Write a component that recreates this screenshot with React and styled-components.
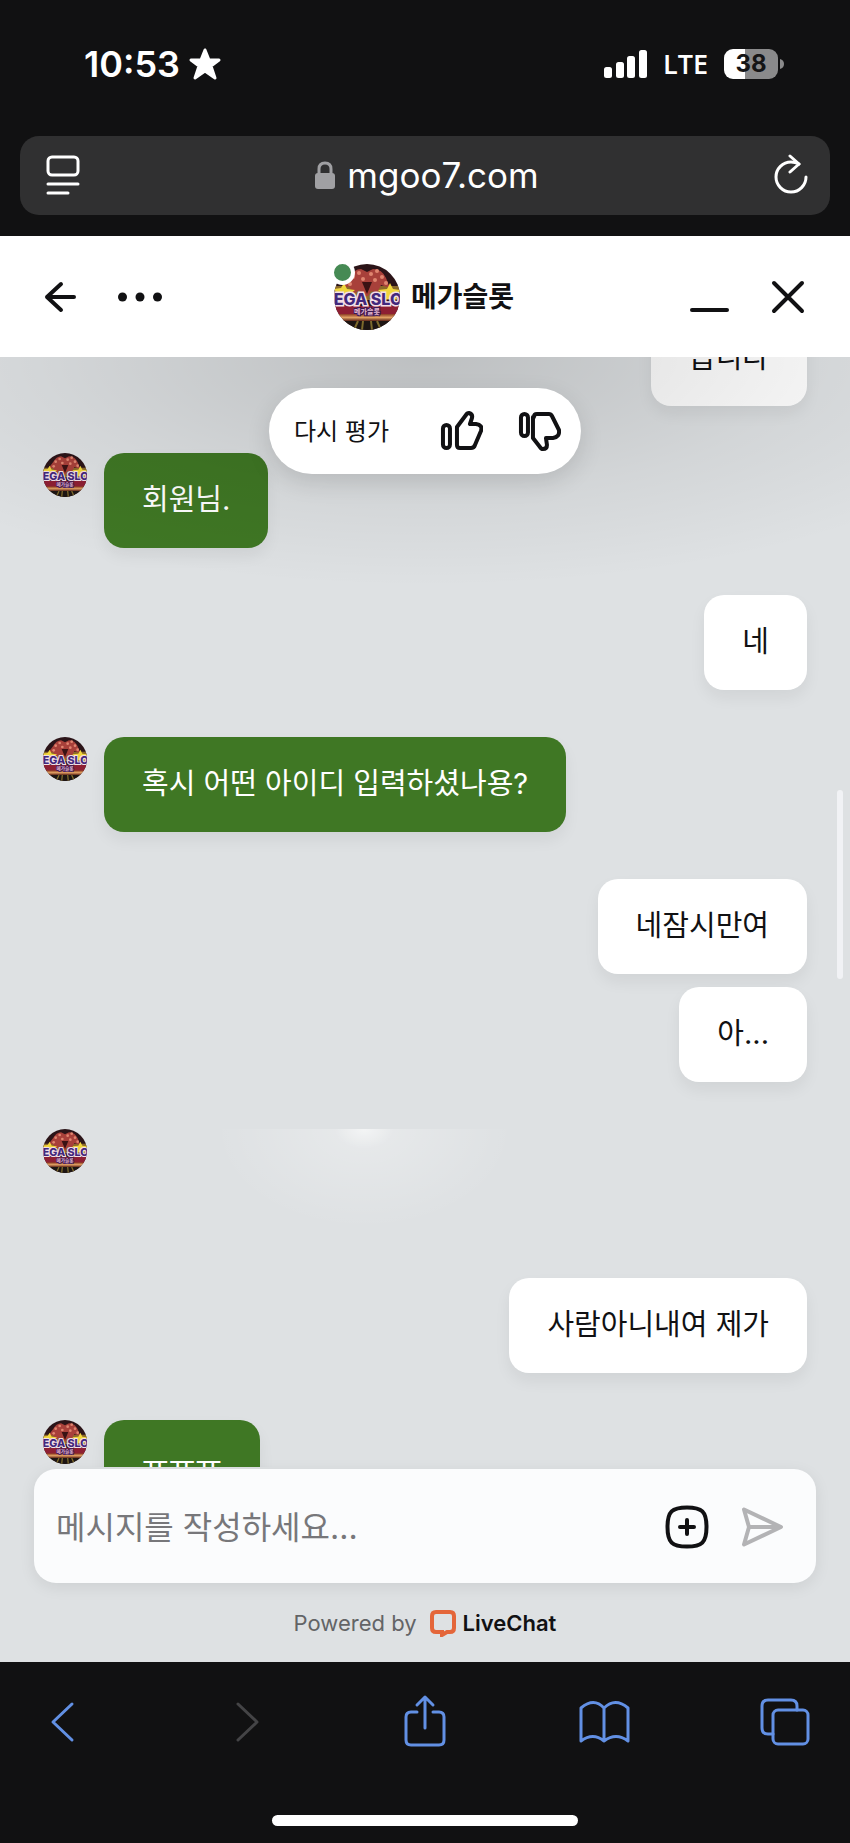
import React, { useId, useLayoutEffect, useRef, useState } from 'react'
import styled, { createGlobalStyle } from 'styled-components'

const GlobalStyle = createGlobalStyle`
   * {
      box-sizing: border-box;
   }
   body {
      margin: 0;
      background: #111112;
      font-family: Inter, 'Noto Sans CJK KR', sans-serif;
   }
   button {
      font: inherit;
      color: inherit;
      background: none;
      border: none;
      padding: 0;
      cursor: pointer;
   }
   svg {
      display: block;
      flex: none;
   }
`

const MESSAGES = [
   { id: 1, text: '습니다', own: true },
   { id: 2, text: '회원님.' },
   { id: 3, text: '네', own: true },
   { id: 4, text: '혹시 어떤 아이디 입력하셨나용?' },
   { id: 5, text: '네잠시만여', own: true },
   { id: 6, text: '아...', own: true, grouped: true },
   { id: 7, loading: true },
   { id: 8, text: '사람아니내여 제가', own: true },
   { id: 9, text: 'ㅠㅠㅠ' },
]

const AgentAvatar = ({ size }) => {
   const id = useId()
   return (
      <svg width={size} height={size} viewBox="0 0 66 66" role="img" aria-label="메가슬롯">
         <defs>
            <clipPath id={`${id}clip`}>
               <circle cx="33" cy="33" r="33" />
            </clipPath>
            <linearGradient id={`${id}gold`} x1="0" y1="0" x2="0" y2="1">
               <stop offset="0" stopColor="#8a3a22" />
               <stop offset="0.5" stopColor="#e0a063" />
               <stop offset="1" stopColor="#5e2417" />
            </linearGradient>
         </defs>
         <g clipPath={`url(#${id}clip)`}>
            <rect width="66" height="66" fill="#2b1418" />
            <path d="M0 22h66v14H0z" fill="#8c6a2a" />
            <path d="M15 14q5-9 12-9l6 3 6-3q9 0 13 9l4 10-9-3-4 8-6-2-3 5h-6l-2-6-7 4-4-8-10 5z" fill="#a8403a" />
            <g fill="#e08570">
               <circle cx="19" cy="13" r="2" />
               <circle cx="25" cy="9" r="2" />
               <circle cx="29" cy="15" r="2" />
               <circle cx="37" cy="10" r="2" />
               <circle cx="43" cy="7" r="2" />
               <circle cx="48" cy="13" r="2" />
               <circle cx="41" cy="16" r="2" />
               <circle cx="34" cy="20" r="2" />
               <circle cx="52" cy="19" r="2" />
               <circle cx="16" cy="20" r="2" />
            </g>
            <path d="M28 18l5 12 5-12z" fill="#3a1214" />
            <path d="M10 19l3 6 8 1-6 5 1 4H2l2-6-5-4 8-1zM56 19l3 6 8 1-6 5 2 4H46l3-5-5-4 9-1z" fill="#f0d63c" />
            <rect y="42" width="66" height="9" fill="#8e1f33" />
            <rect y="50" width="66" height="7" fill={`url(#${id}gold)`} />
            <rect y="57" width="66" height="9" fill="#1d1513" />
            <path d="M20 66l4-9M28 66l1-9M38 66l-1-9M47 66l-4-9" stroke="#7d6a2c" strokeWidth="2" />
            <text
               x="34" y="41" textAnchor="middle" fontFamily="Inter, sans-serif" fontSize="16" fontWeight="800"
               fill="#43287c" stroke="#f3dfe6" strokeWidth="3" paintOrder="stroke"
            >
               EGA SLO
            </text>
            <text
               x="33" y="50" textAnchor="middle" fontFamily="'Noto Sans CJK KR', sans-serif" fontSize="7" fontWeight="700"
               fill="#e7b9d0" stroke="#3a1a55" strokeWidth="2" paintOrder="stroke"
            >
               메가슬롯
            </text>
         </g>
      </svg>
   )
}

const ThumbIcon = ({ down }) => (
   <svg width="44" height="44" viewBox="0 0 44 44" fill="none" stroke="#111113" strokeWidth="4" strokeLinejoin="round">
      {down ? (
         <>
            <rect x="4" y="5" width="7" height="22" rx="3.5" />
            <path d="M17 8q0-3 3-3h12q2 0 3 2l7 14q1 7-6 8h-7l1 7q0 4-4 4-2 0-3-2l-7-9V8z" />
         </>
      ) : (
         <>
            <rect x="4" y="16" width="7" height="23" rx="3.5" />
            <path d="M18 18l9-12q1-2 3-2 4 1 3 5l-2 6h6q7 1 5 7l-6 14q-1 3-4 3H21q-3 0-3-3V18z" />
         </>
      )}
   </svg>
)

const StatusBar = () => (
   <Status>
      <Clock>
         10:53
         <svg width="34" height="34" viewBox="0 0 34 34" aria-hidden="true">
            <path
               d="M17 3l4 10h10L23 19l4 12-10-7-10 7 4-12L3 13h10z"
               fill="#fff" stroke="#fff" strokeWidth="3" strokeLinejoin="round"
            />
         </svg>
      </Clock>
      <Signals>
         <svg width="43" height="28" viewBox="0 0 43 28" fill="#fff" aria-hidden="true">
            <rect y="17" width="8" height="11" rx="2.5" />
            <rect x="12" y="12" width="8" height="16" rx="2.5" />
            <rect x="23" y="6" width="8" height="22" rx="2.5" />
            <rect x="35" width="8" height="28" rx="2.5" />
         </svg>
         <Network>LTE</Network>
         <Battery>
            <BatteryLevel>38</BatteryLevel>
            <svg width="4" height="10" viewBox="0 0 4 10" aria-hidden="true">
               <path d="M0 0q4 1 4 5t-4 5z" fill="#8a8a8b" />
            </svg>
         </Battery>
      </Signals>
   </Status>
)

const AddressBar = () => (
   <Address>
      <button aria-label="Reader">
         <svg width="34" height="40" viewBox="0 0 34 40" fill="none" stroke="#fff" strokeWidth="3" strokeLinecap="round">
            <rect x="2" y="2" width="30" height="18" rx="4" />
            <path d="M2 29h30M2 38h20" />
         </svg>
      </button>
      <Domain>
         <svg width="20" height="28" viewBox="0 0 20 28" aria-hidden="true">
            <path d="M4 13V8q0-6 6-6t6 6v5" fill="none" stroke="#a0a0a3" strokeWidth="3" />
            <rect y="12" width="20" height="16" rx="3" fill="#a0a0a3" />
         </svg>
         mgoo7.com
      </Domain>
      <button aria-label="Reload">
         <svg width="34" height="42" viewBox="0 0 34 42" fill="none" stroke="#fff" strokeWidth="3" strokeLinecap="round" strokeLinejoin="round">
            <path d="M32 23A15 15 0 1 1 17 8q4 0 8 2" />
            <path d="M16 2l9 8-9 8" />
         </svg>
      </button>
   </Address>
)

const ChatHeader = () => (
   <Header>
      <HeaderActions>
         <button aria-label="Back">
            <svg width="34" height="34" viewBox="0 0 34 34" fill="none" stroke="#111113" strokeWidth="4" strokeLinecap="round" strokeLinejoin="round">
               <path d="M18 4L4 17l14 13M4 17h27" />
            </svg>
         </button>
         <button aria-label="Menu">
            <svg width="44" height="34" viewBox="0 0 44 34" fill="#111113">
               <circle cx="4.5" cy="17" r="4.5" />
               <circle cx="22" cy="17" r="4.5" />
               <circle cx="39.5" cy="17" r="4.5" />
            </svg>
         </button>
      </HeaderActions>
      <Agent>
         <AgentPicture>
            <AgentAvatar size={66} />
            <Online />
         </AgentPicture>
         <AgentName>메가슬롯</AgentName>
      </Agent>
      <HeaderActions $end>
         <button aria-label="Minimize">
            <svg width="40" height="34" viewBox="0 0 40 34" stroke="#111113" strokeWidth="4" strokeLinecap="round">
               <path d="M2 30h35" />
            </svg>
         </button>
         <button aria-label="Close">
            <svg width="34" height="34" viewBox="0 0 34 34" stroke="#111113" strokeWidth="4" strokeLinecap="round">
               <path d="M3 3l28 28M31 3L3 31" />
            </svg>
         </button>
      </HeaderActions>
   </Header>
)

const Message = ({ text, own, grouped, loading }) => (
   <MessageRow $own={own} $grouped={grouped}>
      {!own && <AgentAvatar size={44} />}
      {loading ? <Placeholder /> : <Bubble $own={own}>{text}</Bubble>}
   </MessageRow>
)

const Composer = () => {
   const [message, setMessage] = useState('')
   return (
      <ComposerForm onSubmit={(e) => e.preventDefault()}>
         <MessageInput
            aria-label="메시지"
            placeholder="메시지를 작성하세요..."
            value={message}
            onChange={(e) => setMessage(e.target.value)}
         />
         <button type="button" aria-label="Add">
            <svg width="44" height="44" viewBox="0 0 44 44" fill="none" stroke="#111113" strokeWidth="4" strokeLinecap="round">
               <path d="M22 2.5c15 0 19.5 4 19.5 19.5S37 41.5 22 41.5 2.5 37.5 2.5 22 7 2.5 22 2.5z" />
               <path d="M22 15v14M15 22h14" />
            </svg>
         </button>
         <button type="submit" aria-label="Send">
            <svg width="44" height="44" viewBox="0 0 44 44" fill="none" stroke="#b3b3b5" strokeWidth="4" strokeLinejoin="round">
               <path d="M3 4.5L40 22 3 39.500 8 22zM8 22h30" />
            </svg>
         </button>
      </ComposerForm>
   )
}

const Toolbar = () => (
   <ToolbarNav>
      <button aria-label="Previous page">
         <svg width="56" height="56" viewBox="0 0 56 56">
            <path d="M38 10L19 28l19 18" />
         </svg>
      </button>
      <button aria-label="Next page" disabled>
         <svg width="56" height="56" viewBox="0 0 56 56">
            <path d="M23 10l19 18-19 18" />
         </svg>
      </button>
      <button aria-label="Share">
         <svg width="56" height="56" viewBox="0 0 56 56">
            <path d="M21 18h-6q-5 0-5 5v23q0 5 5 5h28q5 0 5-5V23q0-5-5-5h-6M29 34V3M21 11l8-8 8 8" />
         </svg>
      </button>
      <button aria-label="Bookmarks">
         <svg width="56" height="56" viewBox="0 0 56 56">
            <path d="M28 14q-10-11-23 0v33q12-9 23 0 12-9 24 0V14q-13-11-24 0zM28 14v33" />
         </svg>
      </button>
      <button aria-label="Tabs">
         <svg width="56" height="56" viewBox="0 0 56 56">
            <rect x="16" y="16" width="35" height="34" rx="5" />
            <path d="M16 40h-5q-6 0-6-6V12q0-6 6-6h23q6 0 6 6v4" />
         </svg>
      </button>
   </ToolbarNav>
)

const App = () => {
   const list = useRef(null)

   useLayoutEffect(() => {
      list.current.scrollTop = 46
   }, [])

   return (
      <Screen>
         <GlobalStyle />
         <StatusBar />
         <AddressBar />
         <Chat>
            <ChatHeader />
            <Conversation>
               <Messages ref={list}>
                  {MESSAGES.map((message) => (
                     <Message key={message.id} {...message} />
                  ))}
               </Messages>
               <Shade />
               <Rating>
                  <RatingLabel>다시 평가</RatingLabel>
                  <button aria-label="Like">
                     <ThumbIcon />
                  </button>
                  <button aria-label="Dislike">
                     <ThumbIcon down />
                  </button>
               </Rating>
               <ScrollThumb />
            </Conversation>
            <Composer />
            <PoweredBy>
               Powered by
               <Brand href="#livechat">
                  <svg width="28" height="28" viewBox="0 0 28 28" fill="none" stroke="#e4663a" strokeWidth="4">
                     <path d="M7 3h14q4 0 4 4v12q0 4-4 4h-3l-5 3v-3H7q-4 0-4-4V7q0-4 4-4z" />
                  </svg>
                  LiveChat
               </Brand>
            </PoweredBy>
         </Chat>
         <Toolbar />
         <HomeIndicator />
      </Screen>
   )
}

const Screen = styled.div`
   display: flex;
   flex-direction: column;
   height: 100vh;
   background: #111112;
   color: #fff;
`
const Status = styled.div`
   display: flex;
   justify-content: space-between;
   align-items: center;
   height: 136px;
   padding: 0 66px 9px 84px;
`
const Clock = styled.div`
   display: flex;
   align-items: center;
   gap: 8px;
   font-size: 36px;
   font-weight: 600;
`
const Signals = styled.div`
   display: flex;
   align-items: center;
   gap: 16px;
`
const Network = styled.span`
   font-family: 'Open Sans', sans-serif;
   font-size: 27px;
   font-weight: 600;
`
const Battery = styled.div`
   display: flex;
   align-items: center;
   gap: 2px;
`
const BatteryLevel = styled.span`
   width: 54px;
   border-radius: 9px;
   background: linear-gradient(90deg, #fff 38%, #8a8a8b 38%);
   color: #151516;
   font-size: 24px;
   font-weight: 700;
   line-height: 30px;
   text-align: center;
`
const Address = styled.div`
   display: flex;
   justify-content: space-between;
   align-items: center;
   height: 79px;
   margin: 0 20px 21px;
   padding: 0 22px 2px 26px;
   border-radius: 19px;
   background: #303031;
`
const Domain = styled.div`
   display: flex;
   align-items: center;
   gap: 12px;
   font-size: 35px;
`
const Chat = styled.main`
   display: flex;
   flex: 1;
   flex-direction: column;
   min-height: 0;
   background: #dee1e3;
   color: #111113;
`
const Header = styled.header`
   display: grid;
   grid-template-columns: 1fr auto 1fr;
   align-items: center;
   height: 121px;
   padding: 0 45px 0 43px;
   background: #fff;
`
const HeaderActions = styled.div`
   display: flex;
   justify-content: ${({ $end }) => ($end ? 'flex-end' : 'flex-start')};
   gap: 41px;
`
const Agent = styled.div`
   display: flex;
   align-items: center;
   gap: 11px;
`
const AgentPicture = styled.div`
   position: relative;
`
const Online = styled.span`
   position: absolute;
   top: -4px;
   left: -4px;
   width: 25px;
   height: 25px;
   border: 4px solid #fff;
   border-radius: 50%;
   background: #468a54;
`
const AgentName = styled.h1`
   margin: 0;
   font-size: 28px;
   font-weight: 700;
   line-height: 40px;
`
const Conversation = styled.section`
   position: relative;
   flex: 1;
   min-height: 0;
`
const Messages = styled.div`
   display: flex;
   flex-direction: column;
   height: 100%;
   padding: 0 43px;
   overflow-y: auto;
   scrollbar-width: none;
`
const MessageRow = styled.div`
   display: flex;
   flex: none;
   justify-content: ${({ $own }) => ($own ? 'flex-end' : 'flex-start')};
   align-items: flex-start;
   gap: 17px;
   margin-top: ${({ $grouped }) => ($grouped ? '13px' : '47px')};
   &:first-child {
      margin-top: 0;
   }
`
const Bubble = styled.div`
   padding: 25px 38px 27px;
   border-radius: 20px;
   background: ${({ $own }) => ($own ? '#fff' : '#3f7724')};
   box-shadow: 0 8px 16px rgba(0, 0, 0, 0.06);
   color: ${({ $own }) => ($own ? '#111113' : '#fff')};
   font-size: 29px;
   line-height: 43px;
`
const Placeholder = styled.div`
   flex: 1;
   height: 102px;
   background:
      radial-gradient(ellipse 30px 20px at 37% 0, rgba(255, 255, 255, 0.5), rgba(255, 255, 255, 0)),
      radial-gradient(ellipse 150px 100px at 37% 0, rgba(255, 255, 255, 0.3), rgba(255, 255, 255, 0));
`
const Shade = styled.div`
   position: absolute;
   inset: 0 0 auto;
   height: 230px;
   background: radial-gradient(ellipse 75% 100% at 50% 0, rgba(0, 0, 0, 0.15), rgba(0, 0, 0, 0.05) 60%, rgba(0, 0, 0, 0));
   pointer-events: none;
`
const Rating = styled.div`
   position: absolute;
   top: 31px;
   left: 50%;
   transform: translateX(-50%);
   display: flex;
   align-items: center;
   gap: 34px;
   height: 86px;
   padding: 0 20px 0 25px;
   border-radius: 43px;
   background: #fff;
   box-shadow: 0 8px 24px rgba(0, 0, 0, 0.12);
   white-space: nowrap;
`
const RatingLabel = styled.span`
   padding: 0 16px 4px 0;
   font-size: 24px;
`
const ScrollThumb = styled.div`
   position: absolute;
   top: 39%;
   right: 7px;
   width: 6px;
   height: 17%;
   border-radius: 3px;
   background: #f1f2f5;
`
const ComposerForm = styled.form`
   display: flex;
   align-items: center;
   gap: 32px;
   height: 114px;
   margin: 2px 34px 0;
   padding: 2px 31px 0 22px;
   border-radius: 22px;
   background: #fbfcfd;
   box-shadow: 0 4px 16px rgba(0, 0, 0, 0.08);
`
const MessageInput = styled.input`
   flex: 1;
   min-width: 0;
   padding: 0;
   border: none;
   outline: none;
   background: none;
   color: #111113;
   font: inherit;
   font-size: 32px;
   &::placeholder {
      color: #77777a;
      opacity: 1;
   }
`
const PoweredBy = styled.footer`
   display: flex;
   justify-content: center;
   align-items: center;
   gap: 12px;
   height: 79px;
   color: #636466;
   font-size: 22px;
`
const Brand = styled.a`
   display: flex;
   align-items: center;
   gap: 6px;
   color: #111113;
   font-weight: 600;
   text-decoration: none;
`
const ToolbarNav = styled.nav`
   display: flex;
   justify-content: space-between;
   padding: 32px 37px 0 34px;
   svg {
      fill: none;
      stroke: #6290e4;
      stroke-width: 3;
      stroke-linecap: round;
      stroke-linejoin: round;
   }
   button:disabled svg {
      stroke: #444446;
   }
`
const HomeIndicator = styled.div`
   flex: none;
   width: 36%;
   height: 11px;
   margin: 65px auto 17px;
   border-radius: 6px;
   background: #fff;
`

export default App
